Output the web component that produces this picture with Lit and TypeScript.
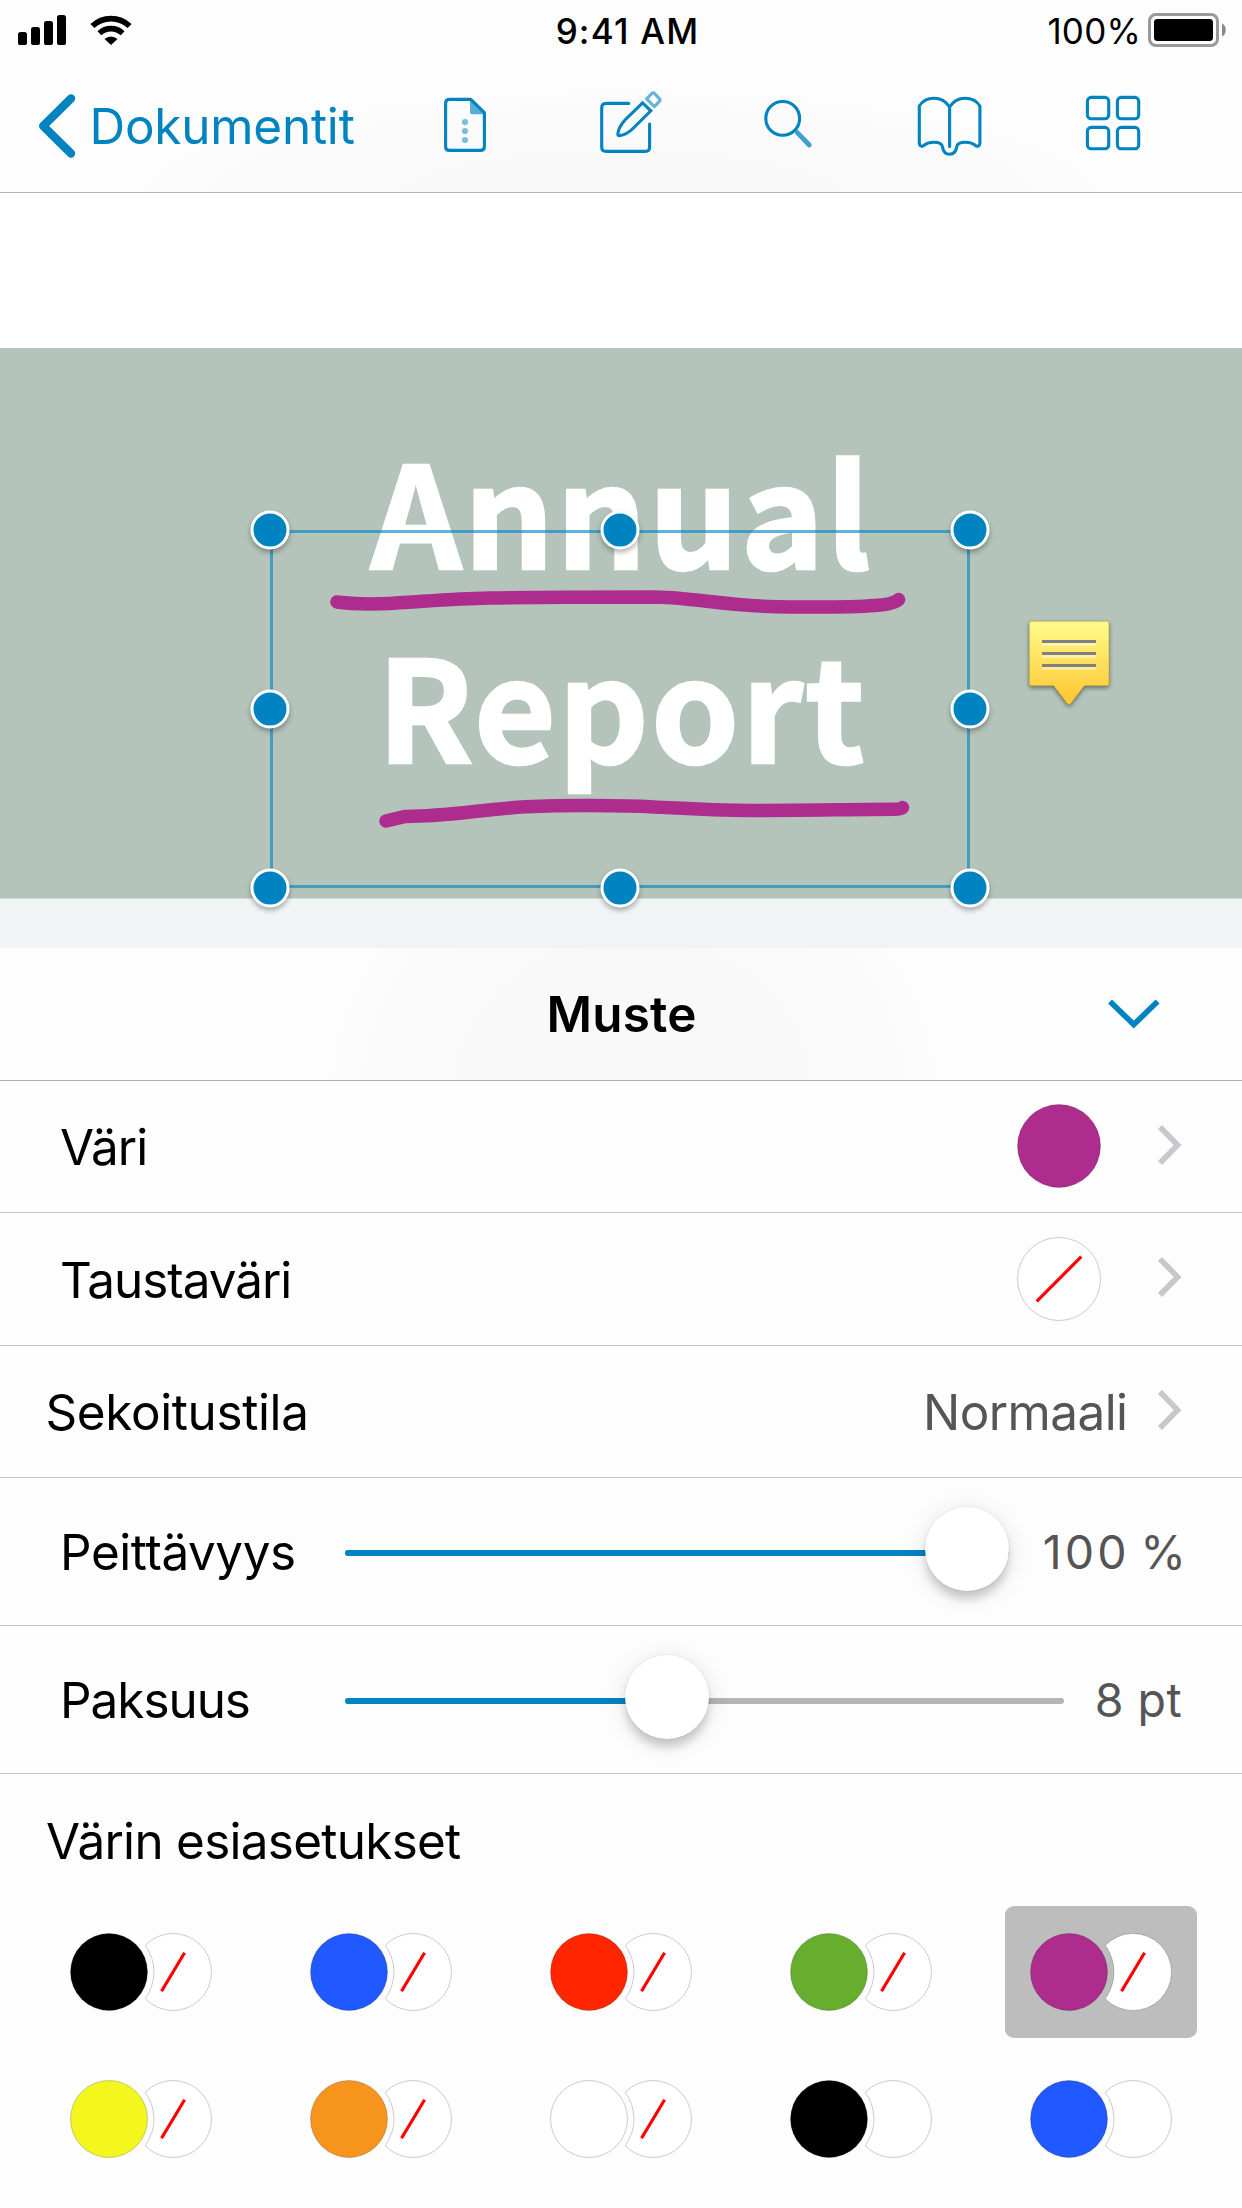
import { LitElement, html, css, svg, nothing } from "lit";
import { customElement, property } from "lit/decorators.js";
import { classMap } from "lit/directives/class-map.js";
import { styleMap } from "lit/directives/style-map.js";

interface Preset {
  color: string;
  fill: "none" | "white";
  selected?: boolean;
}

const PRESETS: Preset[] = [
  { color: "#000000", fill: "none" },
  { color: "#2059ff", fill: "none" },
  { color: "#ff2600", fill: "none" },
  { color: "#68ae2e", fill: "none" },
  { color: "#ad2c8e", fill: "none", selected: true },
  { color: "#f3f71e", fill: "none" },
  { color: "#f7941e", fill: "none" },
  { color: "#ffffff", fill: "none" },
  { color: "#000000", fill: "white" },
  { color: "#2059ff", fill: "white" },
];

@customElement("status-bar")
export class StatusBar extends LitElement {
  static styles = css`
    :host {
      display: grid;
      grid-template-columns: 1fr auto 1fr;
      align-items: start;
      height: 60px;
      box-sizing: border-box;
      padding: 13px 15px 0 18px;
      color: #000;
    }
    .left { display: flex; gap: 24px; padding-top: 2px; }
    .left svg, .right svg { display: block; flex: none; }
    .time { font-size: 35px; line-height: 36px; font-weight: 500; letter-spacing: 1.2px; white-space: nowrap; margin-left: 14.5px; margin-right: 4.5px; }
    .right { display: flex; justify-content: flex-end; gap: 7px; }
    .percent { font-size: 35px; line-height: 36px; letter-spacing: 0.2px; }
  `;
  render() {
    return html`
      <div class="left">
        <svg width="48" height="30" viewBox="0 0 48 30">
          <rect x="0" y="17" width="9" height="13" rx="2.6" />
          <rect x="13" y="12" width="9" height="18" rx="2.6" />
          <rect x="26" y="6" width="9" height="24" rx="2.6" />
          <rect x="39" y="0" width="9" height="30" rx="2.6" />
        </svg>
        <svg width="43" height="30" viewBox="0 0 43 30">
          <path d="M2.4 11 A27 27 0 0 1 39.6 11" fill="none" stroke="#000" stroke-width="5.8" />
          <path d="M9.4 18.2 A17 17 0 0 1 32.6 18.2" fill="none" stroke="#000" stroke-width="5.6" />
          <path d="M14.5 24 A9.6 9.6 0 0 1 27.5 24 L21 30 Z" />
        </svg>
      </div>
      <div class="time">9:41 AM</div>
      <div class="right">
        <span class="percent">100%</span>
        <svg width="79" height="34" viewBox="0 0 79 34">
          <rect x="1.5" y="1.5" width="68" height="31" rx="6.5" fill="none" stroke="#999" stroke-width="3" />
          <rect x="6" y="6" width="59" height="22" rx="3.4" />
          <path d="M74 10.5 C79 12.5 79 21.5 74 23.5 Z" fill="#888" />
        </svg>
      </div>
    `;
  }
}

@customElement("nav-bar")
export class NavBar extends LitElement {
  static styles = css`
    :host {
      display: flex;
      height: 133px;
      box-sizing: border-box;
      padding-left: 38px;
      border-bottom: 1px solid #b2b2b2;
      color: #0083c1;
      align-items: flex-start;
    }
    .back { display: flex; align-items: center; width: 392px; height: 132px; }
    .back svg { flex: none; margin-right: 13.5px; }
    .back span { font-size: 49.4px; letter-spacing: -0.2px; line-height: 132px; }
    .tools { display: flex; gap: 92px; padding-top: 28px; }
    svg { display: block; fill: none; stroke: currentColor; stroke-width: 3.1; }
    .solid { fill: currentColor; stroke: none; }
  `;
  render() {
    return html`
      <div class="back">
        <svg width="38" height="66" viewBox="38 93.5 38 66">
          <path d="M71 99 L43.2 126.5 L71 154" stroke-width="8.4" stroke-linecap="round" stroke-linejoin="round" />
        </svg>
        <span>Dokumentit</span>
      </div>
      <div class="tools">
        <svg width="70" height="76" viewBox="430 88 70 76">
          <path d="M470.8 99.4 H449.6 Q445.6 99.4 445.6 103.4 V146.4 Q445.6 150.4 449.6 150.4 H480.4 Q484.4 150.4 484.4 146.4 V112.6 Z" stroke-linejoin="round" />
          <path class="solid" d="M470 99.5 V112.3 Q470 114.3 472 114.3 H485 Z" opacity="0.65" />
          <g class="solid" opacity="0.5">
            <circle cx="465" cy="122" r="3.1" />
            <circle cx="465" cy="131" r="3.1" />
            <circle cx="465" cy="140" r="3.1" />
          </g>
        </svg>
        <svg width="70" height="76" viewBox="592 88 70 76">
          <path d="M628.7 103.4 H606.2 Q601.7 103.4 601.7 107.9 V147 Q601.7 151.4 606.2 151.4 H645.2 Q649.6 151.4 649.6 147 V124" stroke-linecap="round" />
          <path d="M642.6 102.8 L625 120 C620.5 125 618.2 130 617.8 134.2 Q617.9 135.8 619.5 135.6 C624 135.2 629 132.5 633.5 128 L650.8 110.8 Z" stroke-linejoin="miter" />
          <path d="M646.6 98.8 L652 93.4 Q653.2 92.4 654.4 93.4 L659.6 98.8 Q660.4 100 659.6 101.2 L654.4 106.6 Z" opacity="0.6" stroke-linejoin="round" />
        </svg>
        <svg width="70" height="76" viewBox="754 88 70 76">
          <circle cx="782.7" cy="118.4" r="16.9" />
          <path d="M797.3 132.6 L809.3 145" stroke-width="4.8" stroke-linecap="round" opacity="0.75" />
        </svg>
        <svg width="70" height="76" viewBox="916 88 70 76">
          <path d="M949.6 146.5 V107 C946 101.5 940 98.3 934 98.3 C928 98.3 922.6 100.8 919.3 106 V143.2 Q919.5 147 923 146 C926 143.5 929.5 142.3 934 142.3 C939 142.3 942 143.6 942.4 146.6 C943.2 151.8 945.2 154.3 949.6 154.3 C954 154.3 956 151.8 956.8 146.6 C957.2 143.6 960.2 142.3 965.2 142.3 C969.7 142.3 973.2 143.5 976.2 146 Q979.7 147 979.9 143.2 V106 C976.6 100.8 971.2 98.3 965.2 98.3 C959.2 98.3 953.2 101.5 949.6 107" stroke-linejoin="round" stroke-linecap="round" />
        </svg>
        <svg width="70" height="76" viewBox="1078 88 70 76">
          <rect x="1087.4" y="97.4" width="21.3" height="21.3" rx="3.8" />
          <rect x="1117.4" y="97.4" width="21.3" height="21.3" rx="3.8" />
          <rect x="1087.4" y="127.4" width="21.3" height="21.3" rx="3.8" />
          <rect x="1117.4" y="127.4" width="21.3" height="21.3" rx="3.8" />
        </svg>
      </div>
    `;
  }
}

@customElement("document-canvas")
export class DocumentCanvas extends LitElement {
  static styles = css`
    :host { display: block; position: relative; height: 755px; box-sizing: border-box; padding-top: 155px; background: linear-gradient(#fff 0 155px, #f0f4f5 155px); }
    .cover { height: 551px; box-sizing: border-box; padding-top: 63px; background: #b4c4ba; border-bottom: 1px solid #d3dcd8; }
    .title { margin: 0; padding-left: 2px; font-family: "Noto Sans CJK SC", sans-serif; font-weight: 700; font-size: 141px; letter-spacing: 2.2px; line-height: 194.3px; color: #fff; -webkit-text-stroke: 2.6px #fff; text-align: center; }
    .title span { display: block; }
    .annotations { position: absolute; inset: 0; display: block; }
    .ink { fill: none; stroke: #ad2c8e; stroke-width: 13.5; stroke-linecap: round; stroke-linejoin: round; }
    .frame { fill: none; stroke: #0083c1; stroke-opacity: 0.62; stroke-width: 3; }
    .handle { fill: #0083c1; stroke: #fff; stroke-width: 3; filter: drop-shadow(0 3px 2.5px rgba(0, 0, 0, 0.3)); }
    .note { filter: drop-shadow(0 2px 2px rgba(0, 0, 0, 0.45)); }
  `;
  render() {
    const handles: Array<[number, number]> = [
      [270, 530], [620, 530], [970, 530],
      [270, 709], [970, 709],
      [270, 888], [620, 888], [970, 888],
    ];
    return html`
      <div class="cover">
        <h1 class="title"><span>Annual</span><span>Report</span></h1>
      </div>
      <svg class="annotations" width="1242" height="755" viewBox="0 193 1242 755">
        <defs>
          <linearGradient id="paper" x1="0" y1="0" x2="0" y2="1">
            <stop offset="0" stop-color="#fffb8a" />
            <stop offset="1" stop-color="#ffc52f" />
          </linearGradient>
        </defs>
        <path class="ink" d="M337 602 C350 603.8 372 604.2 390 603.4 C420 602 450 598.6 490 598 C540 597 600 597 655 597 C700 598 730 607 790 607 C815 607.2 850 607.6 875 605.6 C888 604.6 895 603 898.6 599.6" />
        <path class="ink" d="M386 821 L405.5 816.4 C450 816.4 480 809.4 526 806.8 C560 805.2 600 805.2 640 806.2 C680 808 700 810.4 753 810.4 C800 810.6 850 809.3 895 809.2 Q900 809.2 902.5 807.6" />
        <rect class="frame" x="271.5" y="531.5" width="697" height="355" />
        ${handles.map(([x, y]) => svg`<circle class="handle" cx=${x} cy=${y} r="18" />`)}
        <g class="note">
          <path d="M1031.3 621.3 H1107 Q1109 621.3 1109 623.3 V683.7 Q1109 685.7 1107 685.7 H1084.3 L1070.5 704 Q1069 705.5 1067.5 704 L1053.7 685.7 H1031.3 Q1029.3 685.7 1029.3 683.7 V623.3 Q1029.3 621.3 1031.3 621.3 Z" fill="url(#paper)" stroke="#a88f30" stroke-opacity="0.5" stroke-width="0.8" />
          <path d="M1042 644.5 H1096 M1042 656.5 H1096 M1042 668.5 H1096" stroke="#fff" stroke-opacity="0.4" stroke-width="3" />
          <path d="M1042 641.5 H1096 M1042 653.5 H1096 M1042 665.5 H1096" stroke="#808080" stroke-width="3" />
        </g>
      </svg>
    `;
  }
}

@customElement("option-row")
export class OptionRow extends LitElement {
  @property() label = "";
  @property() value = "";
  @property() swatch = "";
  @property({ type: Boolean, reflect: true }) outdent = false;
  @property() tracking = "normal";

  static styles = css`
    :host { display: flex; align-items: center; flex: none; box-sizing: border-box; padding: 0 60px; border-bottom: 1px solid #c6c6c9; }
    :host([outdent]) { padding-left: 45.5px; }
    .label { flex: 1; font-size: 49.4px; color: #000; letter-spacing: -0.35px; padding-top: 1px; }
    .tight { letter-spacing: -1px; }
    .value { font-size: 49.4px; letter-spacing: -0.55px; color: #555; margin-right: 30.5px; padding-top: 1px; }
    svg { display: block; flex: none; }
    .swatch { margin-right: 57px; margin-bottom: 1px; }
    .chevron { margin-bottom: 4px; }
  `;
  render() {
    return html`
      <span class=${classMap({ label: true, tight: this.tracking === "tight" })}>${this.label}</span>
      ${this.value ? html`<span class="value">${this.value}</span>` : nothing}
      ${this.swatch
        ? html`<svg class="swatch" width="84" height="84" viewBox="-42 -42 84 84">
            <circle r="41.5" fill=${this.swatch === "none" ? "#fff" : this.swatch} stroke="#000" stroke-opacity="0.2" />
            ${this.swatch === "none" ? svg`<path d="M-22.3 22.3 L22.3 -22.3" stroke="#f00" stroke-width="3.2" />` : nothing}
          </svg>`
        : nothing}
      <svg class="chevron" width="24" height="40" viewBox="0 0 24 40">
        <path d="M2 2 L19.6 20 L2 38" fill="none" stroke="#c7c7cc" stroke-width="5.6" />
      </svg>
    `;
  }
}

@customElement("slider-row")
export class SliderRow extends LitElement {
  @property() label = "";
  @property() value = "";
  @property({ type: Number }) ratio = 0;

  static styles = css`
    :host { display: grid; grid-template-columns: 285px 1fr auto; align-items: center; flex: none; box-sizing: border-box; padding: 0 60px; border-bottom: 1px solid #c6c6c9; }
    .label { font-size: 49.4px; letter-spacing: -1px; }
    .loose { letter-spacing: -0.4px; }
    .slider { position: relative; height: 6px; margin-top: 3px; border-radius: 3px; background: #b5b5b5; }
    .filled { height: 100%; border-radius: 3px; background: #0083c1; }
    .thumb { position: absolute; top: -43px; width: 84px; height: 84px; margin-left: -42px; border-radius: 50%; background: #fff; box-shadow: 0 9px 8px -1px rgba(0, 0, 0, 0.16), 0 4px 24px rgba(0, 0, 0, 0.12), 0 0 1px 1px rgba(0, 0, 0, 0.04); }
    .value { font-size: 46.5px; color: #555; letter-spacing: 0.4px; margin-left: 31px; white-space: nowrap; }
    .wide { letter-spacing: 3.2px; word-spacing: -6px; margin-left: 33.5px; margin-right: -7px; }
  `;
  render() {
    const at = `${this.ratio * 100}%`;
    return html`
      <span class=${classMap({ label: true, loose: this.label.length > 8 })}>${this.label}</span>
      <div class="slider">
        <div class="filled" style=${styleMap({ width: at })}></div>
        <div class="thumb" style=${styleMap({ left: at })}></div>
      </div>
      <span class=${classMap({ value: true, wide: this.value.includes("%") })}>${this.value}</span>
    `;
  }
}

@customElement("preset-swatch")
export class PresetSwatch extends LitElement {
  @property() color = "#000";
  @property() fill = "none";
  @property({ type: Boolean, reflect: true }) selected = false;

  static styles = css`
    :host { display: flex; align-items: center; justify-content: center; width: 192px; height: 132px; border-radius: 9px; }
    :host([selected]) { background: #bdbdbd; }
    svg { display: block; }
    .edge { stroke: #000; stroke-opacity: 0.2; stroke-width: 1; }
  `;
  render() {
    return html`<svg width="142" height="78" viewBox="-39 -39 142 78">
      <circle class="edge" r="38.5" fill=${this.color} />
      <path class="edge" fill="#fff" d="M36.24 -26.68 A38.5 38.5 0 1 1 36.24 26.68 A45 45 0 0 0 36.24 -26.68 Z" />
      ${this.fill === "none" ? svg`<path d="M52.5 19.2 L75.6 -19.2" stroke="#f00" stroke-width="3.2" />` : nothing}
    </svg>`;
  }
}

@customElement("app-root")
export class AppRoot extends LitElement {
  static styles = css`
    :host { display: flex; flex-direction: column; width: 1242px; height: 2208px; overflow: hidden; background: #fdfdfd; font-family: Inter, "Liberation Sans", sans-serif; color: #000; }
    .top { background: radial-gradient(ellipse 560px 130px at 50% 105%, #f9f9f9 40%, #fdfdfd 100%); }
    .header { display: grid; grid-template-columns: 1fr auto 1fr; align-items: center; height: 133px; flex: none; box-sizing: border-box; border-bottom: 1px solid #b2b2b2; background: radial-gradient(ellipse 340px 300px at 51% 110%, #f8f8f8 40%, #fdfdfd 100%); }
    .title { grid-column: 2; margin: 0; padding-left: 1px; font-size: 49.4px; font-weight: 600; letter-spacing: 0.2px; }
    .collapse { justify-self: end; display: block; margin-right: 80px; }
    .odd { height: 132px; }
    .even { height: 133px; }
    .tall { height: 148px; }
    .presets-title { margin: 0; padding: 35px 0 0 46px; font-size: 49.4px; font-weight: 400; line-height: 64px; letter-spacing: -0.7px; }
    .presets { display: grid; grid-template-columns: repeat(5, 192px); gap: 15px 48px; padding: 33px 45px 0; }
  `;
  render() {
    return html`
      <div class="top">
        <status-bar></status-bar>
        <nav-bar></nav-bar>
      </div>
      <document-canvas></document-canvas>
      <div class="header">
        <h2 class="title">Muste</h2>
        <svg class="collapse" width="56" height="32" viewBox="1106 998 56 32">
          <path d="M1110 1001.5 L1133.8 1024.5 L1157.6 1001.5" fill="none" stroke="#0083c1" stroke-width="5.6" />
        </svg>
      </div>
      <option-row class="odd" label="Väri" swatch="#ad2c8e" tracking="tight"></option-row>
      <option-row class="even" label="Taustaväri" swatch="none" tracking="tight"></option-row>
      <option-row class="odd" label="Sekoitustila" value="Normaali" outdent></option-row>
      <slider-row class="tall" label="Peittävyys" value="100 %" .ratio=${0.937}></slider-row>
      <slider-row class="tall" label="Paksuus" value="8 pt" .ratio=${0.448}></slider-row>
      <h3 class="presets-title">Värin esiasetukset</h3>
      <div class="presets">
        ${PRESETS.map((p) => html`<preset-swatch .color=${p.color} .fill=${p.fill} ?selected=${p.selected ?? false}></preset-swatch>`)}
      </div>
    `;
  }
}
